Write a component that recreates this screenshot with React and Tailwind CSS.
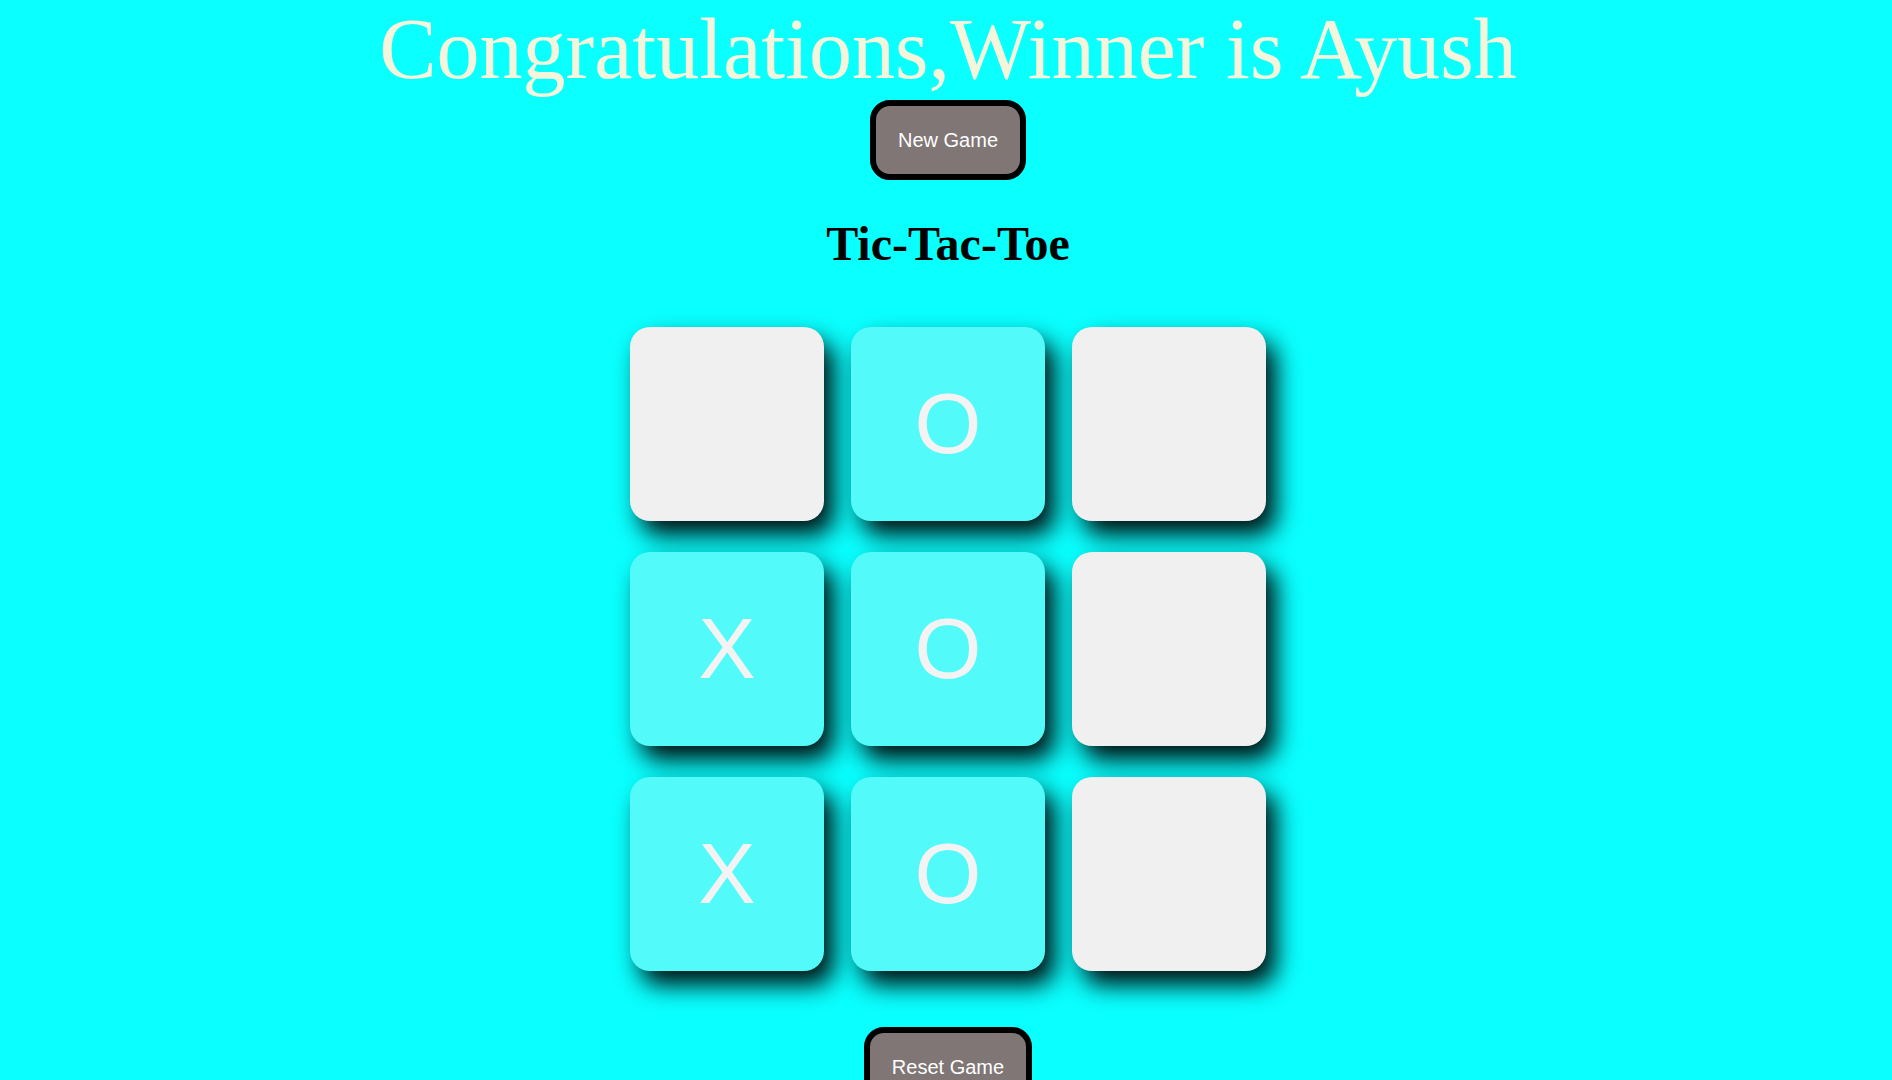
import React from 'react';

const board = ['', 'O', '', 'X', 'O', '', 'X', 'O', ''];

const Cell = ({ value }) => {
  const filled = value !== '';
  return (
    <div
      className={`w-[194px] h-[194px] rounded-[20px] flex items-center justify-center pb-[3px] shadow-[10px_14px_24px_rgba(0,0,0,0.95)] text-[86px] leading-none text-[#f3f3f3] font-['Liberation_Sans',Arial,sans-serif] ${
        filled ? 'bg-[#53fafa]' : 'bg-[#f0f0f0]'
      }`}
    >
      {value}
    </div>
  );
};

const GameButton = ({ children }) => (
  <button className="shrink-0 h-[80px] bg-[#807676] border-[6px] border-black rounded-[20px] px-[22px] text-[20px] leading-[23px] text-white font-['Liberation_Sans',Arial,sans-serif]">
    {children}
  </button>
);

export default function App() {
  return (
    <div className="min-h-screen bg-[#0affff] flex flex-col items-center pl-[4px] pb-[40px]">
      {/* winner banner */}
      <h1 className="shrink-0 m-0 h-[100px] text-[86px] leading-[98px] text-[#f5f5dc] font-['Liberation_Serif','Times_New_Roman',serif] font-normal whitespace-nowrap">
        Congratulations,Winner is Ayush
      </h1>
      <GameButton>New Game</GameButton>

      <h2 className="shrink-0 mt-[36px] text-[48px] leading-[55px] font-bold text-black font-['Liberation_Serif','Times_New_Roman',serif]">
        Tic-Tac-Toe
      </h2>

      <div className="shrink-0 mt-[56px] grid grid-cols-[194px_194px_194px] gap-x-[27px] gap-y-[31px]">
        {board.map((v, i) => (
          <Cell key={i} value={v} />
        ))}
      </div>

      <div className="shrink-0 mt-[56px]">
        <GameButton>Reset Game</GameButton>
      </div>
    </div>
  );
}
